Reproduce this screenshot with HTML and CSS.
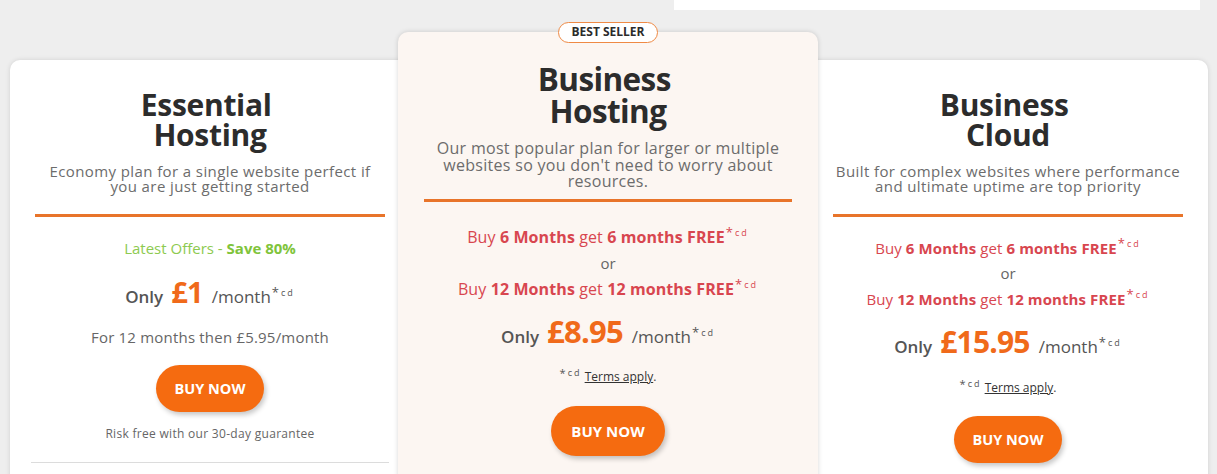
FILE: index.html
```html
<!DOCTYPE html>
<html lang="en">
<head>
<meta charset="utf-8">
<title>Hosting plans</title>
<link rel="stylesheet" href="styles.css">
</head>
<body>
<div class="topbar"><div class="topbox"></div></div>
<section class="plans">
  <article class="card card-side card-left">
    <h2 class="title">Essential&nbsp;<br>Hosting</h2>
    <p class="desc">Economy plan for a single website perfect if<br>you are just getting started</p>
    <hr class="rule">
    <p class="latest">Latest Offers - <b>Save 80%</b></p>
    <p class="price"><span class="only">Only</span><span class="amount">£1</span><span class="per">/month<span class="sup">*<span class="cd">cd</span></span></span></p>
    <p class="then">For 12 months then £5.95/month</p>
    <a class="buy" href="#">BUY NOW</a>
    <p class="risk">Risk free with our 30-day guarantee</p>
    <hr class="thin">
  </article>
  <article class="card card-mid">
    <span class="badge">BEST SELLER</span>
    <h2 class="title">Business&nbsp;<br>Hosting</h2>
    <p class="desc">Our most popular plan for larger or multiple<br>websites so you don't need to worry about<br>resources.</p>
    <hr class="rule">
    <p class="offer first">Buy <b>6 Months</b> get <b>6 months FREE</b><span class="sup">*<span class="cd">cd</span></span></p>
    <p class="or">or</p>
    <p class="offer">Buy <b>12 Months</b> get <b>12 months FREE</b><span class="sup">*<span class="cd">cd</span></span></p>
    <p class="price"><span class="only">Only</span><span class="amount">£8.95</span><span class="per">/month<span class="sup">*<span class="cd">cd</span></span></span></p>
    <p class="terms"><span class="tsup">*<span class="cd">cd</span></span> <a href="#">Terms apply</a>.</p>
    <a class="buy" href="#">BUY NOW</a>
  </article>
  <article class="card card-side card-right">
    <h2 class="title">Business&nbsp;<br>Cloud</h2>
    <p class="desc">Built for complex websites where performance<br>and ultimate uptime are top priority</p>
    <hr class="rule">
    <p class="offer first">Buy <b>6 Months</b> get <b>6 months FREE</b><span class="sup">*<span class="cd">cd</span></span></p>
    <p class="or">or</p>
    <p class="offer">Buy <b>12 Months</b> get <b>12 months FREE</b><span class="sup">*<span class="cd">cd</span></span></p>
    <p class="price"><span class="only">Only</span><span class="amount">£15.95</span><span class="per">/month<span class="sup">*<span class="cd">cd</span></span></span></p>
    <p class="terms"><span class="tsup">*<span class="cd">cd</span></span> <a href="#">Terms apply</a>.</p>
    <a class="buy" href="#">BUY NOW</a>
  </article>
</section>
</body>
</html>
```
FILE: styles.css
```css
* { box-sizing: border-box; }
html, body { margin: 0; padding: 0; }
body {
  background: #eeeeee;
  font-family: "Open Sans", "Liberation Sans", sans-serif;
  color: #666;
  height: 474px;
  overflow: hidden;
}
p, h2 { margin: 0; }

.topbar { height: 10px; display: flex; }
.topbox { margin-left: 674px; width: 526px; height: 10px; background: #fff; }

.plans {
  display: flex;
  align-items: flex-start;
  padding-left: 10px;
}

.card {
  display: flex;
  flex-direction: column;
  align-items: center;
  text-align: center;
  border-radius: 10px;
  position: relative;
}
.card-side {
  width: 400px;
  height: 520px;
  margin-top: 50px;
  background: #fff;
  padding: 30px 25px 0;
  box-shadow: 0 0 5px rgba(0,0,0,0.12);
}
.card-right { margin-left: -10px; }
.card-mid {
  width: 420px;
  height: 520px;
  margin-top: 22px;
  margin-left: -12px;
  background: #fcf6f2;
  padding: 31px 26px 0;
  z-index: 2;
  box-shadow: 0 0 5px rgba(0,0,0,0.16);
}

.badge {
  position: absolute;
  top: -10px;
  left: 50%;
  transform: translateX(-50%);
  width: 100px;
  height: 21px;
  border: 1.5px solid #ef8a45;
  border-radius: 11px;
  background: #fff;
  color: #2b2b2b;
  font-weight: 700;
  font-size: 12px;
  line-height: 18px;
}

.title {
  font-size: 30px;
  line-height: 30px;
  font-weight: 700;
  color: #2c2c2c;
  letter-spacing: -0.3px;
}
.card-mid .title { font-size: 31.5px; line-height: 32px; letter-spacing: -0.6px; }

.desc {
  margin-top: 13.5px;
  font-size: 15px;
  line-height: 15px;
  color: #6c6c6c;
  letter-spacing: 0.4px;
  white-space: nowrap;
}
.card-mid .desc { margin-top: 13px; font-size: 16px; line-height: 16.5px; letter-spacing: 0.3px; }

.rule {
  align-self: stretch;
  margin: 20.5px 0 0;
  height: 3px;
  border: 0;
  background: #e8742a;
}
.card-mid .rule { margin-top: 9.5px; }

.latest {
  margin-top: 21px;
  font-size: 15px;
  line-height: 20px;
  color: #8dca50;
}
.latest b { color: #7fc43b; font-weight: 700; }

.price {
  display: flex;
  justify-content: center;
  align-items: baseline;
  height: 34px;
  white-space: nowrap;
  margin-top: 18px;
}
.card-left .price { margin-top: 19px; }
.card-mid .price { margin-top: 16px; height: 36px; }
.price span { line-height: 1; }
.only { font-size: 17px; font-weight: 600; color: #555; margin-right: 8px; }
.amount { font-size: 29px; font-weight: 700; color: #f06a1a; margin-right: 9px; letter-spacing: -0.8px; }
.card-right .amount { font-size: 30px; }
.card-mid .amount { font-size: 31px; }
.per { font-size: 17px; font-weight: 500; color: #555; }
.sup { font-size: 13px; line-height: 0; position: relative; top: -6px; margin-left: 1px; }
.cd { font-size: 9px; line-height: 0; letter-spacing: 2px; margin-left: 2px; position: relative; top: -1px; }

.then { margin-top: 16px; font-size: 15px; line-height: 20px; color: #666; letter-spacing: 0.2px; }

.buy {
  display: flex;
  align-items: center;
  justify-content: center;
  width: 108px;
  height: 47px;
  border-radius: 24px;
  background: #f56b10;
  color: #fff;
  font-weight: 700;
  font-size: 14.5px;
  text-decoration: none;
  box-shadow: 2px 3px 5px rgba(0,0,0,0.22);
  margin-top: 18px;
}
.card-right .buy { margin-top: 20px; }
.card-mid .buy { width: 114px; height: 50px; border-radius: 25px; font-size: 15px; margin-top: 21px; }

.risk { margin-top: 14px; font-size: 12px; line-height: 16px; color: #666; letter-spacing: 0.3px; }
.thin { align-self: stretch; margin: 20px -4px 0; border: 0; height: 1px; background: #dcdcdc; }

.offer {
  font-size: 15px;
  line-height: 20px;
  color: #d8464f;
  white-space: nowrap;
  letter-spacing: 0.1px;
}
.offer b { font-weight: 700; }
.offer.first { margin-top: 21px; }
.card-mid .offer { font-size: 16px; line-height: 21px; }
.card-mid .offer.first { margin-top: 24.5px; }
.or { margin-top: 5px; font-size: 15px; line-height: 20px; color: #666; }
.or + .offer { margin-top: 6px; }

.terms { margin-top: 19px; font-size: 12px; line-height: 16px; color: #444; }
.card-mid .terms { margin-top: 17.5px; }
.terms a { color: #333; text-decoration: underline; }
.tsup { position: relative; top: -4px; font-size: 11px; line-height: 0; color: #555; }
.tsup .cd { font-size: 9px; }
```
